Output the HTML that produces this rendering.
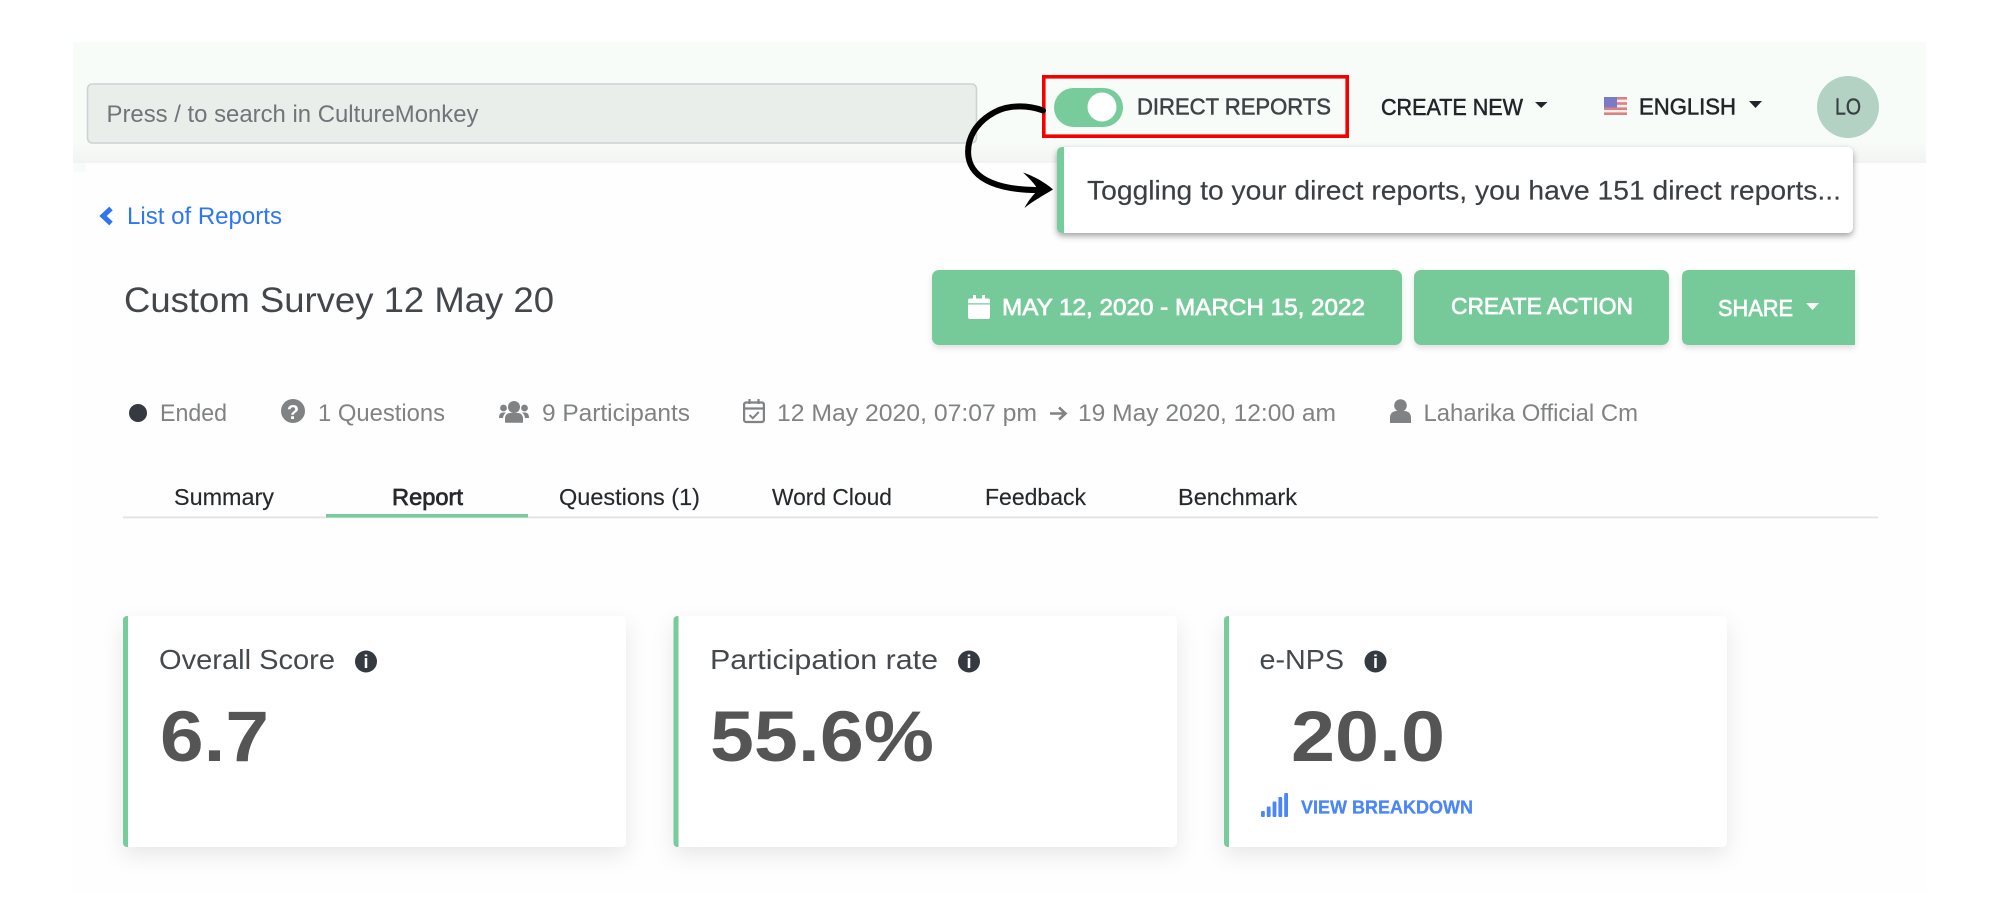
<!DOCTYPE html>
<html lang="en">
<head>
<meta charset="utf-8">
<title>Custom Survey Report</title>
<style>
html,body{margin:0;padding:0;background:#fff;width:2000px;height:923px;overflow:hidden}
svg{display:block;filter:blur(.35px)}
text{font-family:"Liberation Sans",sans-serif}
.m{fill:#808283;font-size:24px}
.t{fill:#26292c;font-size:23.5px;stroke:#26292c;stroke-width:.15}
.h{fill:#222529;font-size:23.5px;font-weight:500;stroke:#222529;stroke-width:.55}
.b{fill:#fff;font-size:23.5px;stroke:#fff;stroke-width:.7}
.c{fill:#45494d;font-size:28px}
.v{fill:#555;font-size:71px;font-weight:bold}
</style>
</head>
<body>
<svg width="2000" height="923" viewBox="0 0 2000 923" xmlns="http://www.w3.org/2000/svg">
<defs>
<linearGradient id="hg" x1="0" y1="0" x2="0" y2="1"><stop offset="0" stop-color="#f8fcf9"/><stop offset=".82" stop-color="#f8fcf9"/><stop offset="1" stop-color="#f1f4f2"/></linearGradient>
<filter id="cs" x="-15%" y="-15%" width="130%" height="135%"><feDropShadow dx="0" dy="8" stdDeviation="11" flood-color="#000" flood-opacity=".09"/></filter>
<filter id="ts" x="-5%" y="-20%" width="110%" height="150%"><feDropShadow dx="0" dy="3" stdDeviation="3.2" flood-color="#000" flood-opacity=".36"/></filter>
<filter id="bs" x="-5%" y="-10%" width="110%" height="130%"><feDropShadow dx="0" dy="3" stdDeviation="3" flood-color="#000" flood-opacity=".12"/></filter>
</defs>

<rect width="2000" height="923" fill="#fff"/>
<rect x="73" y="163" width="1853" height="730" fill="#fefefe"/>
<rect x="73" y="42" width="1853" height="121" fill="url(#hg)"/>
<rect x="73" y="163" width="13" height="9" fill="#f8fcf9"/>

<!-- search -->
<rect x="87.5" y="84" width="889" height="59" rx="5" fill="#eaeeeb" stroke="#ccd2d6" stroke-width="1.6"/>
<text x="106.5" y="122" font-size="24" fill="#6f7579" textLength="372" lengthAdjust="spacingAndGlyphs">Press / to search in CultureMonkey</text>

<!-- direct reports -->
<rect x="1043.8" y="76.8" width="303.4" height="59.4" fill="none" stroke="#f40000" stroke-width="3.6"/>
<rect x="1054" y="88" width="69" height="39" rx="19.5" fill="#78cb9b"/>
<circle cx="1102" cy="107" r="14.5" fill="#fff"/>
<text x="1137" y="114.5" class="h" style="fill:#3f4347;stroke:#3f4347" textLength="194" lengthAdjust="spacingAndGlyphs">DIRECT REPORTS</text>

<text x="1381" y="115" class="h" textLength="142" lengthAdjust="spacingAndGlyphs">CREATE NEW</text>
<polygon points="1535,102 1547.5,102 1541.2,108" fill="#222529"/>

<!-- flag -->
<g>
<rect x="1604" y="97" width="23" height="18" fill="#f3eeee"/>
<rect x="1604" y="97" width="23" height="2.6" fill="#dc8082"/>
<rect x="1604" y="102.2" width="23" height="2.6" fill="#dc8082"/>
<rect x="1604" y="107.4" width="23" height="2.6" fill="#dc8082"/>
<rect x="1604" y="112.4" width="23" height="2.6" fill="#dc8082"/>
<rect x="1604" y="97" width="13" height="10.5" fill="#7a7bc8"/>
</g>
<text x="1639" y="114.5" class="h" textLength="97" lengthAdjust="spacingAndGlyphs">ENGLISH</text>
<polygon points="1749,101 1762,101 1755.5,108" fill="#222529"/>

<circle cx="1848" cy="107" r="31" fill="#b3d2c3"/>
<text x="1835" y="114.5" font-size="23.5" fill="#3a3f44" stroke="#3a3f44" stroke-width=".4" textLength="26" lengthAdjust="spacingAndGlyphs">LO</text>

<!-- tooltip -->
<rect x="1057" y="147" width="796" height="86" rx="6" fill="#fff" filter="url(#ts)"/>
<rect x="1057" y="147" width="14" height="86" rx="5" fill="#78cb9b"/>
<rect x="1064" y="147" width="12" height="86" fill="#fff"/>
<text x="1087" y="199.5" font-size="26.5" fill="#3b3f43" stroke="#3b3f43" stroke-width=".15" textLength="754" lengthAdjust="spacingAndGlyphs">Toggling to your direct reports, you have 151 direct reports...</text>

<!-- hand-drawn arrow -->
<path d="M1043 110.5C1030 105.500 1010 104 995 112C976 122 966 139 968.500 157C972 180 1000 191 1044 190" fill="none" stroke="#000" stroke-width="6" stroke-linecap="round"/>
<path d="M1023 172.500C1034 176 1046 183 1053 189.500C1044 195 1033 201 1024.500 208C1028 201 1033 195 1038 190C1035 184 1029 178 1023 172.500Z" fill="#000"/>

<!-- back link -->
<path d="M111 208.500L103 216L111 223.500" fill="none" stroke="#2f77f2" stroke-width="5"/>
<text x="127" y="224" font-size="24" fill="#2f77f2" textLength="155" lengthAdjust="spacingAndGlyphs">List of Reports</text>

<!-- title -->
<text x="124" y="312" font-size="35" fill="#43474b" textLength="430" lengthAdjust="spacingAndGlyphs">Custom Survey 12 May 20</text>

<!-- buttons -->
<rect x="932" y="270" width="470" height="75" rx="7" fill="#76ca9a" filter="url(#bs)"/>
<path d="M973 295h3v3.500h6V295h3v3.500h3c1.200 0 2 .8 2 2v2.700H968v-2.700c0-1.200.8-2 2-2h3ZM968 304.500h22V317c0 1.200-.8 2-2 2h-18c-1.200 0-2-.8-2-2Z" fill="#fff"/>
<text x="1002" y="315" class="b" textLength="363" lengthAdjust="spacingAndGlyphs">MAY 12, 2020 - MARCH 15, 2022</text>
<rect x="1414" y="270" width="255" height="75" rx="7" fill="#76ca9a" filter="url(#bs)"/>
<text x="1451" y="314" class="b" textLength="182" lengthAdjust="spacingAndGlyphs">CREATE ACTION</text>
<path d="M1689 270H1855V345H1689Q1682 345 1682 338V277Q1682 270 1689 270Z" fill="#76ca9a" filter="url(#bs)"/>
<text x="1718" y="316" class="b" textLength="75" lengthAdjust="spacingAndGlyphs">SHARE</text>
<polygon points="1806,303 1819,303 1812.500,310" fill="#fff"/>

<!-- meta row -->
<circle cx="138" cy="413" r="9" fill="#343a40"/>
<text x="160" y="421" class="m" textLength="67" lengthAdjust="spacingAndGlyphs">Ended</text>
<circle cx="293" cy="411" r="12" fill="#808283"/>
<text x="293" y="419" text-anchor="middle" font-size="20" font-weight="bold" fill="#fff">?</text>
<text x="318" y="421" class="m" textLength="127" lengthAdjust="spacingAndGlyphs">1 Questions</text>
<g fill="#808283">
<circle cx="514" cy="407" r="6"/>
<circle cx="503.500" cy="408" r="3.400"/>
<circle cx="524.500" cy="408" r="3.400"/>
<path d="M505 422v-3.500c0-3.500 2.500-5.500 5-5.500h8c2.500 0 5 2 5 5.500V422c0 .5-.5.8-1 .8H506c-.5 0-1-.3-1-.8Z"/>
<path d="M499 417.500c0-3 1.500-5 4-5h3c-1.500 1.200-2.800 3-3 5.500h-3c-.6 0-1-.2-1-.5Z"/>
<path d="M529 417.500c0-3-1.500-5-4-5h-3c1.500 1.200 2.800 3 3 5.500h3c.6 0 1-.2 1-.5Z"/>
</g>
<text x="542" y="421" class="m" textLength="148" lengthAdjust="spacingAndGlyphs">9 Participants</text>
<g fill="none" stroke="#808283" stroke-width="2.2">
<rect x="744.100" y="402.500" width="19.800" height="19.500" rx="2"/>
<path d="M744 408.500H764"/>
<path d="M749.500 399V404M758.500 399V404"/>
<path d="M749.500 415L752.800 418.200L758.800 412" stroke-width="2"/>
</g>
<text x="777" y="421" class="m" textLength="260" lengthAdjust="spacingAndGlyphs">12 May 2020, 07:07 pm</text>
<path d="M1050 413.500H1065M1059 407.500L1065.500 413.500L1059 419.500" fill="none" stroke="#808283" stroke-width="2.600"/>
<text x="1078" y="421" class="m" textLength="258" lengthAdjust="spacingAndGlyphs">19 May 2020, 12:00 am</text>
<circle cx="1400.500" cy="405.500" r="6.300" fill="#808283"/>
<path d="M1390 423v-5.500c0-4 3-6.500 6.500-6.500h8c3.500 0 6.500 2.500 6.500 6.500V423Z" fill="#808283"/>
<text x="1423.500" y="421" class="m" textLength="214.500" lengthAdjust="spacingAndGlyphs">Laharika Official Cm</text>

<!-- tabs -->
<text x="174" y="505" class="t" textLength="100" lengthAdjust="spacingAndGlyphs">Summary</text>
<text x="392" y="505" class="t" style="stroke-width:.7" textLength="71" lengthAdjust="spacingAndGlyphs">Report</text>
<text x="559" y="505" class="t" textLength="141" lengthAdjust="spacingAndGlyphs">Questions (1)</text>
<text x="772" y="505" class="t" textLength="120" lengthAdjust="spacingAndGlyphs">Word Cloud</text>
<text x="985" y="505" class="t" textLength="101" lengthAdjust="spacingAndGlyphs">Feedback</text>
<text x="1178" y="505" class="t" textLength="119" lengthAdjust="spacingAndGlyphs">Benchmark</text>
<rect x="123" y="516.500" width="1755" height="1.800" fill="#e2e3e4"/>
<rect x="326" y="514" width="202" height="3.500" fill="#78cb9b"/>

<!-- card 1 -->
<rect x="123" y="616" width="503" height="231" rx="5" fill="#fff" filter="url(#cs)"/>
<rect x="123" y="616" width="10" height="231" rx="4" fill="#78cb9b"/>
<rect x="128" y="616" width="10" height="231" fill="#fff"/>
<text x="159" y="669" class="c" textLength="176" lengthAdjust="spacingAndGlyphs">Overall Score</text>
<circle cx="366" cy="661.500" r="11" fill="#343a40"/>
<text x="366" y="668" text-anchor="middle" font-size="18" font-weight="bold" fill="#fff">i</text>
<text x="160" y="761" class="v" textLength="109" lengthAdjust="spacingAndGlyphs">6.7</text>

<!-- card 2 -->
<rect x="673.500" y="616" width="503.500" height="231" rx="5" fill="#fff" filter="url(#cs)"/>
<rect x="673.500" y="616" width="10" height="231" rx="4" fill="#78cb9b"/>
<rect x="678.500" y="616" width="10" height="231" fill="#fff"/>
<text x="710" y="669" class="c" textLength="228" lengthAdjust="spacingAndGlyphs">Participation rate</text>
<circle cx="969" cy="661.500" r="11" fill="#343a40"/>
<text x="969" y="668" text-anchor="middle" font-size="18" font-weight="bold" fill="#fff">i</text>
<text x="710" y="761" class="v" textLength="224" lengthAdjust="spacingAndGlyphs">55.6%</text>

<!-- card 3 -->
<rect x="1224" y="616" width="503" height="231" rx="5" fill="#fff" filter="url(#cs)"/>
<rect x="1224" y="616" width="10" height="231" rx="4" fill="#78cb9b"/>
<rect x="1229" y="616" width="10" height="231" fill="#fff"/>
<text x="1259.500" y="669" class="c" textLength="84.500" lengthAdjust="spacingAndGlyphs">e-NPS</text>
<circle cx="1375.500" cy="661.500" r="11" fill="#343a40"/>
<text x="1375.500" y="668" text-anchor="middle" font-size="18" font-weight="bold" fill="#fff">i</text>
<text x="1291" y="761" class="v" textLength="154" lengthAdjust="spacingAndGlyphs">20.0</text>
<g fill="#4a86f7">
<rect x="1261" y="811" width="3.800" height="6" rx="1"/>
<rect x="1266.800" y="806.500" width="3.800" height="10.500" rx="1"/>
<rect x="1272.600" y="801.500" width="3.800" height="15.500" rx="1"/>
<rect x="1278.400" y="797" width="3.800" height="20" rx="1"/>
<rect x="1284.200" y="793" width="3.800" height="24" rx="1"/>
</g>
<text x="1301" y="813.500" font-size="18" font-weight="bold" fill="#4a86f7" stroke="#4a86f7" stroke-width=".3" textLength="172" lengthAdjust="spacingAndGlyphs">VIEW BREAKDOWN</text>
</svg>
</body>
</html>
